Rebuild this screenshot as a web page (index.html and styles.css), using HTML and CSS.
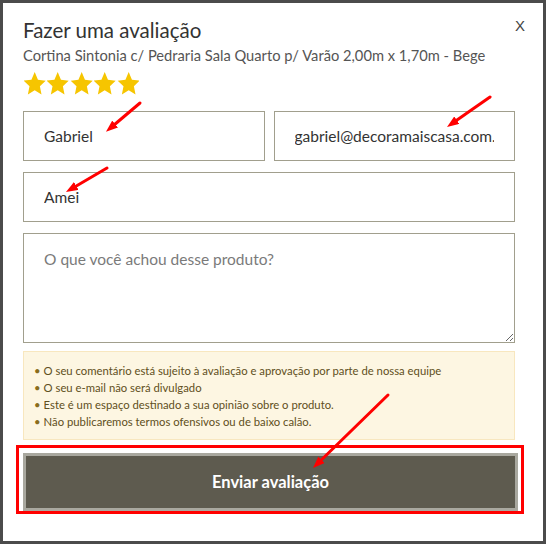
FILE: index.html
```html
<!DOCTYPE html>
<html lang="pt-BR">
<head>
  <meta charset="UTF-8" />
  <meta name="viewport" content="width=device-width,initial-scale=1.0"/>
  <title>Fazer uma avaliação</title>
  <link rel="stylesheet" href="styles.css">
</head>
<body>
  <div class="review-modal">
    <button type="button" class="close-btn">X</button>
    <h2 class="review-title">Fazer uma avaliação</h2>
    <p class="review-product">Cortina Sintonia c/ Pedraria Sala Quarto p/ Varão 2,00m x 1,70m - Bege</p>
    <div class="stars">
      <svg viewBox="1 1.2 22 21" preserveAspectRatio="none"><path d="M12 1.2l3.2 7.1 7.6.8-5.7 5.1 1.6 7.6L12 17.9l-6.7 3.9 1.6-7.6L1.2 9.1l7.6-.8z"/></svg>
      <svg viewBox="1 1.2 22 21" preserveAspectRatio="none"><path d="M12 1.2l3.2 7.1 7.6.8-5.7 5.1 1.6 7.6L12 17.9l-6.7 3.9 1.6-7.6L1.2 9.1l7.6-.8z"/></svg>
      <svg viewBox="1 1.2 22 21" preserveAspectRatio="none"><path d="M12 1.2l3.2 7.1 7.6.8-5.7 5.1 1.6 7.6L12 17.9l-6.7 3.9 1.6-7.6L1.2 9.1l7.6-.8z"/></svg>
      <svg viewBox="1 1.2 22 21" preserveAspectRatio="none"><path d="M12 1.2l3.2 7.1 7.6.8-5.7 5.1 1.6 7.6L12 17.9l-6.7 3.9 1.6-7.6L1.2 9.1l7.6-.8z"/></svg>
      <svg viewBox="1 1.2 22 21" preserveAspectRatio="none"><path d="M12 1.2l3.2 7.1 7.6.8-5.7 5.1 1.6 7.6L12 17.9l-6.7 3.9 1.6-7.6L1.2 9.1l7.6-.8z"/></svg>
    </div>
    <form class="review-form">
      <div class="form-row">
        <input type="text" class="form-control" value="Gabriel" />
        <input type="email" class="form-control" value="gabriel@decoramaiscasa.com.br" />
      </div>
      <input type="text" class="form-control" value="Amei" />
      <textarea class="form-control form-textarea" placeholder="O que você achou desse produto?"></textarea>
      <ul class="notice">
        <li>O seu comentário está sujeito à avaliação e aprovação por parte de nossa equipe</li>
        <li>O seu e-mail não será divulgado</li>
        <li>Este é um espaço destinado a sua opinião sobre o produto.</li>
        <li>Não publicaremos termos ofensivos ou de baixo calão.</li>
      </ul>
      <button type="submit" class="btn-send">Enviar avaliação</button>
    </form>

    <!-- annotations -->
    <svg class="marks" width="540" height="538" viewBox="3 3 540 538">
      <defs>
        <marker id="head" markerWidth="4" markerHeight="3" refX="0.5" refY="1.5" orient="auto" markerUnits="strokeWidth">
          <path d="M0 0L4 1.5L0 3z" fill="#f00"/>
        </marker>
      </defs>
      <g stroke="#f00" stroke-width="3" fill="none" stroke-linecap="round">
        <line x1="140" y1="103" x2="114" y2="125" marker-end="url(#head)"/>
        <line x1="490" y1="97" x2="455.6" y2="121" marker-end="url(#head)"/>
        <line x1="107" y1="168" x2="75" y2="186.7" marker-end="url(#head)"/>
        <line x1="388" y1="395" x2="320.5" y2="460.7" marker-end="url(#head)"/>
        <rect x="17.5" y="446.5" width="505" height="66" stroke-linecap="butt"/>
      </g>
    </svg>
  </div>
</body>
</html>
```

FILE: styles.css
```css
:root {
  --text-color: #333;
  --muted: #555;
  --border-color: #a19f8d;
  --star: #f6c500;
  --notice-bg: #fdf6e2;
  --notice-border: #f8e7bf;
  --notice-text: #5f4f21;
  --btn-bg: #5e5b4f;
  --btn-border: #a9a89f;
}
* { margin: 0; padding: 0; box-sizing: border-box; }
body {
  font-family: Lato, 'Open Sans', sans-serif;
  background: #4b4b4b;
  width: 546px;
  height: 544px;
  overflow: hidden;
  padding: 3px;
}
.review-modal {
  position: relative;
  width: 540px;
  height: 538px;
  background: #fff;
  padding: 14px 28px 0 20px;
}
.close-btn {
  position: absolute;
  top: 14px;
  right: 18px;
  background: none;
  border: none;
  font-family: 'Liberation Sans', sans-serif;
  font-size: 15px;
  color: #444;
  cursor: pointer;
}
.review-title { font-size: 20.5px; font-weight: 400; color: var(--text-color); line-height: 26px; }
.review-product { font-size: 14.7px; color: var(--muted); line-height: 18px; margin-top: 3px; }
.stars { display: flex; margin-top: 8px; height: 23px; }
.stars svg { width: 23.4px; height: 23px; fill: var(--star); padding: 0 0.5px; }
.review-form { display: flex; flex-direction: column; gap: 11px; margin-top: 16px; }
.form-row { display: flex; gap: 9px; }
.form-control {
  width: 100%;
  height: 50px;
  padding: 0 20px;
  border: 1px solid var(--border-color);
  border-radius: 0;
  font-family: inherit;
  font-size: 15.5px;
  color: var(--text-color);
  background: #fff;
}
.form-textarea { height: 110px; padding-top: 15px; resize: vertical; line-height: 20px; }
.form-textarea::placeholder { color: #7a7a7a; }
.notice {
  list-style: none;
  margin-top: -3px;
  background: var(--notice-bg);
  border: 1px solid var(--notice-border);
  padding: 10px 10px 9px 10px;
  font-size: 11.3px;
  line-height: 17px;
  color: var(--notice-text);
}
.notice li::before { content: "\2022"; margin-right: 3px; color: #8a6d1c; }
.btn-send {
  margin-top: 2px;
  width: 495px;
  height: 58px;
  background: var(--btn-bg);
  border: 3px solid var(--btn-border);
  color: #fff;
  font-family: inherit;
  font-size: 16.5px;
  font-weight: 700;
  cursor: pointer;
}
.marks { position: absolute; left: 0; top: 0; pointer-events: none; }
```
